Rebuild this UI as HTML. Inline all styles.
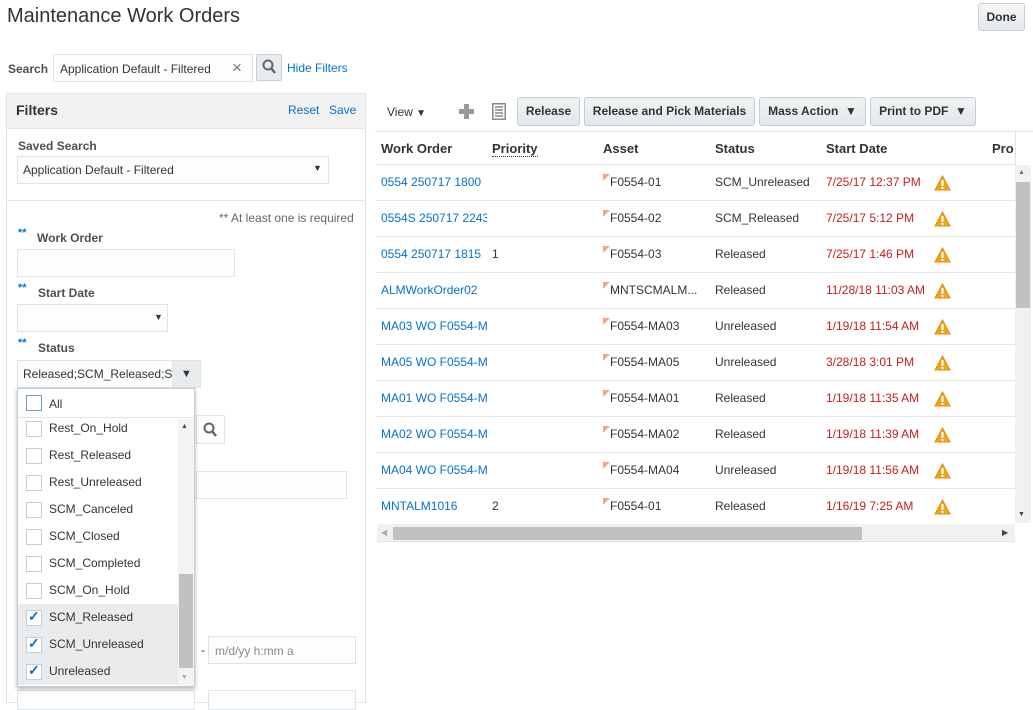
<!DOCTYPE html>
<html><head><style>
*{box-sizing:border-box;margin:0;padding:0}
body{width:1033px;height:697px;overflow:hidden;background:#fff;font-family:"Liberation Sans",Arial,sans-serif;font-size:12px;color:#333;position:relative}
.a{position:absolute}
.inp{position:absolute;border:1px solid #dfe4e7;background:#fcfdfe}
.lnk{color:#0572ce}
.btn{position:absolute;top:97px;height:29px;border:1px solid #c4ced7;border-radius:3px;background:linear-gradient(#f1f3f3,#e4e8ea);font-weight:bold;font-size:12px;line-height:27px;text-align:center;color:#333;white-space:nowrap}
.lbl{position:absolute;font-weight:bold;color:#4f4f4f}
.req{color:#0572ce;font-weight:bold;font-size:11px;position:absolute;left:18px}
.row{position:absolute;left:377px;width:638px;height:36px;border-bottom:1px solid #e7e7e7}
.row span{position:absolute;top:10px;white-space:nowrap;overflow:hidden}
.warn{position:absolute;left:557px;top:10px}
.flag{position:absolute;left:226px;top:9px}
.cb{position:absolute;left:8px;width:16px;height:16px;border:1px solid #c4ced7;background:#fff}
.it{position:absolute;left:0;width:160px;height:27px}
.it span{position:absolute;left:31px;top:6px}
.chk{color:#0572ce;font-size:14px;position:absolute;left:10px;top:4px;font-weight:bold}
</style></head><body>
<div class="a" style="left:7px;top:5px;font-size:20px;color:#333">Maintenance Work Orders</div>
<div class="a" style="left:978px;top:3px;width:47px;height:28px;border:1px solid #c4ced7;border-radius:3px;background:linear-gradient(#f6f7f7,#e4e8ea);font-weight:bold;text-align:center;line-height:26px">Done</div>

<div class="a" style="left:8px;top:62px;color:#4f4f4f;font-weight:bold;font-size:12px">Search</div>
<div class="inp" style="left:53px;top:54px;width:200px;height:28px"><span class="a" style="left:6px;top:7px;color:#333">Application Default - Filtered</span><span class="a" style="left:178px;top:3px;font-size:17px;color:#777">×</span></div>
<div class="a" style="left:256px;top:54px;width:26px;height:27px;border:1px solid #c4ced7;border-radius:2px;background:#e9ecee"><svg width="24" height="25"><circle cx="11" cy="10" r="4.5" fill="none" stroke="#666" stroke-width="2"/><line x1="14" y1="13" x2="18" y2="18" stroke="#666" stroke-width="2.5"/></svg></div>
<div class="a lnk" style="left:287px;top:61px">Hide Filters</div>

<!-- filters panel -->
<div class="a" style="left:6px;top:93px;width:360px;height:610px;border:1px solid #dfe4e7"></div>
<div class="a" style="left:6px;top:93px;width:360px;height:36px;background:#f2f2f2;border:1px solid #dfe4e7"></div>
<div class="a" style="left:16px;top:102px;font-size:14px;font-weight:bold;color:#333">Filters</div>
<div class="a lnk" style="left:288px;top:103px">Reset</div>
<div class="a lnk" style="left:329px;top:103px">Save</div>
<div class="lbl" style="left:18px;top:139px">Saved Search</div>
<div class="inp" style="left:17px;top:156px;width:312px;height:28px"><span class="a" style="left:5px;top:6px;color:#333">Application Default - Filtered</span><span class="a" style="left:295px;top:6px;font-size:9px">▼</span></div>
<div class="a" style="left:7px;top:200px;width:358px;height:1px;background:#dfe4e7"></div>
<div class="a" style="left:219px;top:211px;color:#666">** At least one is required</div>
<div class="req" style="top:227px">**</div><div class="lbl" style="left:37px;top:231px">Work Order</div>
<div class="inp" style="left:17px;top:249px;width:218px;height:28px"></div>
<div class="req" style="top:282px">**</div><div class="lbl" style="left:38px;top:286px">Start Date</div>
<div class="inp" style="left:17px;top:304px;width:151px;height:28px"><span class="a" style="left:136px;top:7px;font-size:9px">▼</span></div>
<div class="req" style="top:337px">**</div><div class="lbl" style="left:38px;top:341px">Status</div>
<div class="inp" style="left:17px;top:360px;width:184px;height:28px;overflow:hidden"><span class="a" style="left:5px;top:6px;white-space:nowrap">Released;SCM_Released;S</span></div>
<div class="a" style="left:172px;top:360px;width:29px;height:28px;background:#e9ecee;border:1px solid #dfe4e7"><span class="a" style="left:8px;top:7px;font-size:11px">▼</span></div>

<!-- behind dropdown -->
<div class="inp" style="left:196px;top:415px;width:29px;height:29px"><svg width="27" height="27"><circle cx="12" cy="12" r="4.5" fill="none" stroke="#666" stroke-width="2"/><line x1="15" y1="15" x2="19" y2="20" stroke="#666" stroke-width="2.5"/></svg></div>
<div class="inp" style="left:196px;top:471px;width:151px;height:28px"></div>
<div class="a" style="left:201px;top:643px">-</div>
<div class="inp" style="left:208px;top:636px;width:148px;height:28px"><span class="a" style="left:6px;top:7px;color:#888">m/d/yy h:mm a</span></div>
<div class="inp" style="left:17px;top:690px;width:178px;height:20px"></div>
<div class="inp" style="left:208px;top:690px;width:148px;height:20px"></div>

<!-- dropdown -->
<div class="a" style="left:17px;top:388px;width:178px;height:299px;background:#fff;border:1px solid #c4ced7;box-shadow:0 2px 4px rgba(0,0,0,.3);overflow:hidden">
 <div class="a" style="left:0;top:0;width:178px;height:29px;border-bottom:1px solid #dfe4e7"><div class="cb" style="left:8px;top:6px;border:1.5px solid #6b9bd8"></div><span class="a" style="left:31px;top:8px">All</span></div>
 <div class="it" style="top:26px"><div class="cb" style="top:6px"></div><span>Rest_On_Hold</span></div>
 <div class="it" style="top:53px"><div class="cb" style="top:6px"></div><span>Rest_Released</span></div>
 <div class="it" style="top:80px"><div class="cb" style="top:6px"></div><span>Rest_Unreleased</span></div>
 <div class="it" style="top:107px"><div class="cb" style="top:6px"></div><span>SCM_Canceled</span></div>
 <div class="it" style="top:134px"><div class="cb" style="top:6px"></div><span>SCM_Closed</span></div>
 <div class="it" style="top:161px"><div class="cb" style="top:6px"></div><span>SCM_Completed</span></div>
 <div class="it" style="top:188px"><div class="cb" style="top:6px"></div><span>SCM_On_Hold</span></div>
 <div class="it" style="top:215px;background:#eaebec"><div class="cb" style="top:6px"></div><b class="chk">✓</b><span>SCM_Released</span></div>
 <div class="it" style="top:242px;background:#eaebec"><div class="cb" style="top:6px"></div><b class="chk">✓</b><span>SCM_Unreleased</span></div>
 <div class="it" style="top:269px;background:#eaebec"><div class="cb" style="top:6px"></div><b class="chk">✓</b><span>Unreleased</span></div>
 <div class="a" style="left:160px;top:30px;width:16px;height:268px;background:#f3f3f3"></div>
 <div class="a" style="left:163px;top:34px;font-size:7px;color:#444">▲</div>
 <div class="a" style="left:163px;top:285px;font-size:7px;color:#aaa">▼</div>
 <div class="a" style="left:161px;top:185px;width:14px;height:94px;background:#c1c1c1"></div>
</div>

<!-- toolbar -->
<div class="a" style="left:387px;top:105px">View <span style="font-size:10px">▼</span></div>
<div class="a" style="left:459px;top:104px;width:15px;height:15px"><div class="a" style="left:5px;top:0;width:5px;height:15px;background:#999"></div><div class="a" style="left:0;top:5px;width:15px;height:5px;background:#999"></div></div>
<svg class="a" style="left:492px;top:103px" width="14" height="17"><rect x="0.75" y="0.75" width="12.5" height="15.5" fill="#fff" stroke="#888" stroke-width="1.5"/><line x1="3" y1="4" x2="11" y2="4" stroke="#888" stroke-width="1.5"/><line x1="3" y1="7" x2="11" y2="7" stroke="#888" stroke-width="1.5"/><line x1="3" y1="10" x2="11" y2="10" stroke="#888" stroke-width="1.5"/><line x1="3" y1="13" x2="11" y2="13" stroke="#888" stroke-width="1.5"/></svg>
<div class="btn" style="left:517px;width:63px">Release</div>
<div class="btn" style="left:584px;width:171px">Release and Pick Materials</div>
<div class="btn" style="left:759px;width:107px">Mass Action &nbsp;▼</div>
<div class="btn" style="left:870px;width:106px">Print to PDF &nbsp;▼</div>

<!-- table -->
<div class="a" style="left:375px;top:131px;width:658px;height:1px;background:#dfe4e7"></div>
<div class="a" style="left:377px;top:131px;width:638px;height:34px;border-bottom:1px solid #dfe4e7;font-weight:bold;font-size:13px">
 <span class="a" style="left:4px;top:10px">Work Order</span>
 <span class="a" style="left:115px;top:10px;border-bottom:1px dotted #333">Priority</span>
 <span class="a" style="left:226px;top:10px">Asset</span>
 <span class="a" style="left:338px;top:10px">Status</span>
 <span class="a" style="left:449px;top:10px">Start Date</span>
 <span class="a" style="left:615px;top:10px">Pro</span>
</div>
<div class="a" style="left:1015px;top:131px;width:1px;height:34px;background:#dfe4e7"></div>

<div class="row" style="top:165px"><span class="lnk" style="left:4px;width:104px">0554 250717 1800</span><svg class="flag" width="8" height="8"><path d="M0 0H7L0 7Z" fill="#f4a582"/></svg><span style="left:233px">F0554-01</span><span style="left:338px">SCM_Unreleased</span><span style="left:449px;color:#c31e1e">7/25/17 12:37 PM</span><svg class="warn" width="17" height="16"><path d="M8.5 1L16 15H1Z" fill="#f2a51c" stroke="#e08e0b"/><rect x="7.5" y="5" width="2" height="6" fill="#fff"/><rect x="7.5" y="12" width="2" height="2" fill="#fff"/></svg></div>
<div class="row" style="top:201px"><span class="lnk" style="left:4px;width:106px">0554S 250717 2243</span><svg class="flag" width="8" height="8"><path d="M0 0H7L0 7Z" fill="#f4a582"/></svg><span style="left:233px">F0554-02</span><span style="left:338px">SCM_Released</span><span style="left:449px;color:#c31e1e">7/25/17 5:12 PM</span><svg class="warn" width="17" height="16"><path d="M8.5 1L16 15H1Z" fill="#f2a51c" stroke="#e08e0b"/><rect x="7.5" y="5" width="2" height="6" fill="#fff"/><rect x="7.5" y="12" width="2" height="2" fill="#fff"/></svg></div>
<div class="row" style="top:237px"><span class="lnk" style="left:4px">0554 250717 1815</span><span style="left:115px">1</span><svg class="flag" width="8" height="8"><path d="M0 0H7L0 7Z" fill="#f4a582"/></svg><span style="left:233px">F0554-03</span><span style="left:338px">Released</span><span style="left:449px;color:#c31e1e">7/25/17 1:46 PM</span><svg class="warn" width="17" height="16"><path d="M8.5 1L16 15H1Z" fill="#f2a51c" stroke="#e08e0b"/><rect x="7.5" y="5" width="2" height="6" fill="#fff"/><rect x="7.5" y="12" width="2" height="2" fill="#fff"/></svg></div>
<div class="row" style="top:273px"><span class="lnk" style="left:4px">ALMWorkOrder02</span><svg class="flag" width="8" height="8"><path d="M0 0H7L0 7Z" fill="#f4a582"/></svg><span style="left:233px">MNTSCMALM...</span><span style="left:338px">Released</span><span style="left:449px;color:#c31e1e">11/28/18 11:03 AM</span><svg class="warn" width="17" height="16"><path d="M8.5 1L16 15H1Z" fill="#f2a51c" stroke="#e08e0b"/><rect x="7.5" y="5" width="2" height="6" fill="#fff"/><rect x="7.5" y="12" width="2" height="2" fill="#fff"/></svg></div>
<div class="row" style="top:309px"><span class="lnk" style="left:4px;width:106px">MA03 WO F0554-MA03</span><svg class="flag" width="8" height="8"><path d="M0 0H7L0 7Z" fill="#f4a582"/></svg><span style="left:233px">F0554-MA03</span><span style="left:338px">Unreleased</span><span style="left:449px;color:#c31e1e">1/19/18 11:54 AM</span><svg class="warn" width="17" height="16"><path d="M8.5 1L16 15H1Z" fill="#f2a51c" stroke="#e08e0b"/><rect x="7.5" y="5" width="2" height="6" fill="#fff"/><rect x="7.5" y="12" width="2" height="2" fill="#fff"/></svg></div>
<div class="row" style="top:345px"><span class="lnk" style="left:4px;width:106px">MA05 WO F0554-MA05</span><svg class="flag" width="8" height="8"><path d="M0 0H7L0 7Z" fill="#f4a582"/></svg><span style="left:233px">F0554-MA05</span><span style="left:338px">Unreleased</span><span style="left:449px;color:#c31e1e">3/28/18 3:01 PM</span><svg class="warn" width="17" height="16"><path d="M8.5 1L16 15H1Z" fill="#f2a51c" stroke="#e08e0b"/><rect x="7.5" y="5" width="2" height="6" fill="#fff"/><rect x="7.5" y="12" width="2" height="2" fill="#fff"/></svg></div>
<div class="row" style="top:381px"><span class="lnk" style="left:4px;width:106px">MA01 WO F0554-MA01</span><svg class="flag" width="8" height="8"><path d="M0 0H7L0 7Z" fill="#f4a582"/></svg><span style="left:233px">F0554-MA01</span><span style="left:338px">Released</span><span style="left:449px;color:#c31e1e">1/19/18 11:35 AM</span><svg class="warn" width="17" height="16"><path d="M8.5 1L16 15H1Z" fill="#f2a51c" stroke="#e08e0b"/><rect x="7.5" y="5" width="2" height="6" fill="#fff"/><rect x="7.5" y="12" width="2" height="2" fill="#fff"/></svg></div>
<div class="row" style="top:417px"><span class="lnk" style="left:4px;width:106px">MA02 WO F0554-MA02</span><svg class="flag" width="8" height="8"><path d="M0 0H7L0 7Z" fill="#f4a582"/></svg><span style="left:233px">F0554-MA02</span><span style="left:338px">Released</span><span style="left:449px;color:#c31e1e">1/19/18 11:39 AM</span><svg class="warn" width="17" height="16"><path d="M8.5 1L16 15H1Z" fill="#f2a51c" stroke="#e08e0b"/><rect x="7.5" y="5" width="2" height="6" fill="#fff"/><rect x="7.5" y="12" width="2" height="2" fill="#fff"/></svg></div>
<div class="row" style="top:453px"><span class="lnk" style="left:4px;width:106px">MA04 WO F0554-MA04</span><svg class="flag" width="8" height="8"><path d="M0 0H7L0 7Z" fill="#f4a582"/></svg><span style="left:233px">F0554-MA04</span><span style="left:338px">Unreleased</span><span style="left:449px;color:#c31e1e">1/19/18 11:56 AM</span><svg class="warn" width="17" height="16"><path d="M8.5 1L16 15H1Z" fill="#f2a51c" stroke="#e08e0b"/><rect x="7.5" y="5" width="2" height="6" fill="#fff"/><rect x="7.5" y="12" width="2" height="2" fill="#fff"/></svg></div>
<div class="row" style="top:489px;border-bottom:none"><span class="lnk" style="left:4px">MNTALM1016</span><span style="left:115px">2</span><svg class="flag" width="8" height="8"><path d="M0 0H7L0 7Z" fill="#f4a582"/></svg><span style="left:233px">F0554-01</span><span style="left:338px">Released</span><span style="left:449px;color:#c31e1e">1/16/19 7:25 AM</span><svg class="warn" width="17" height="16"><path d="M8.5 1L16 15H1Z" fill="#f2a51c" stroke="#e08e0b"/><rect x="7.5" y="5" width="2" height="6" fill="#fff"/><rect x="7.5" y="12" width="2" height="2" fill="#fff"/></svg></div>

<!-- scrollbars -->
<div class="a" style="left:1015px;top:165px;width:16px;height:358px;background:#f1f1f1"></div>
<div class="a" style="left:1018px;top:169px;font-size:7px;color:#777">▲</div>
<div class="a" style="left:1018px;top:511px;font-size:7px;color:#444">▼</div>
<div class="a" style="left:1016px;top:182px;width:14px;height:126px;background:#c1c1c1"></div>
<div class="a" style="left:377px;top:524px;width:638px;height:18px;background:#f1f1f1;border-bottom:1px solid #dfe4e7"></div>
<div class="a" style="left:381px;top:528px;font-size:8px;color:#aaa">◀</div>
<div class="a" style="left:1002px;top:528px;font-size:8px;color:#444">▶</div>
<div class="a" style="left:393px;top:527px;width:469px;height:13px;background:#c1c1c1"></div>
</body></html>
